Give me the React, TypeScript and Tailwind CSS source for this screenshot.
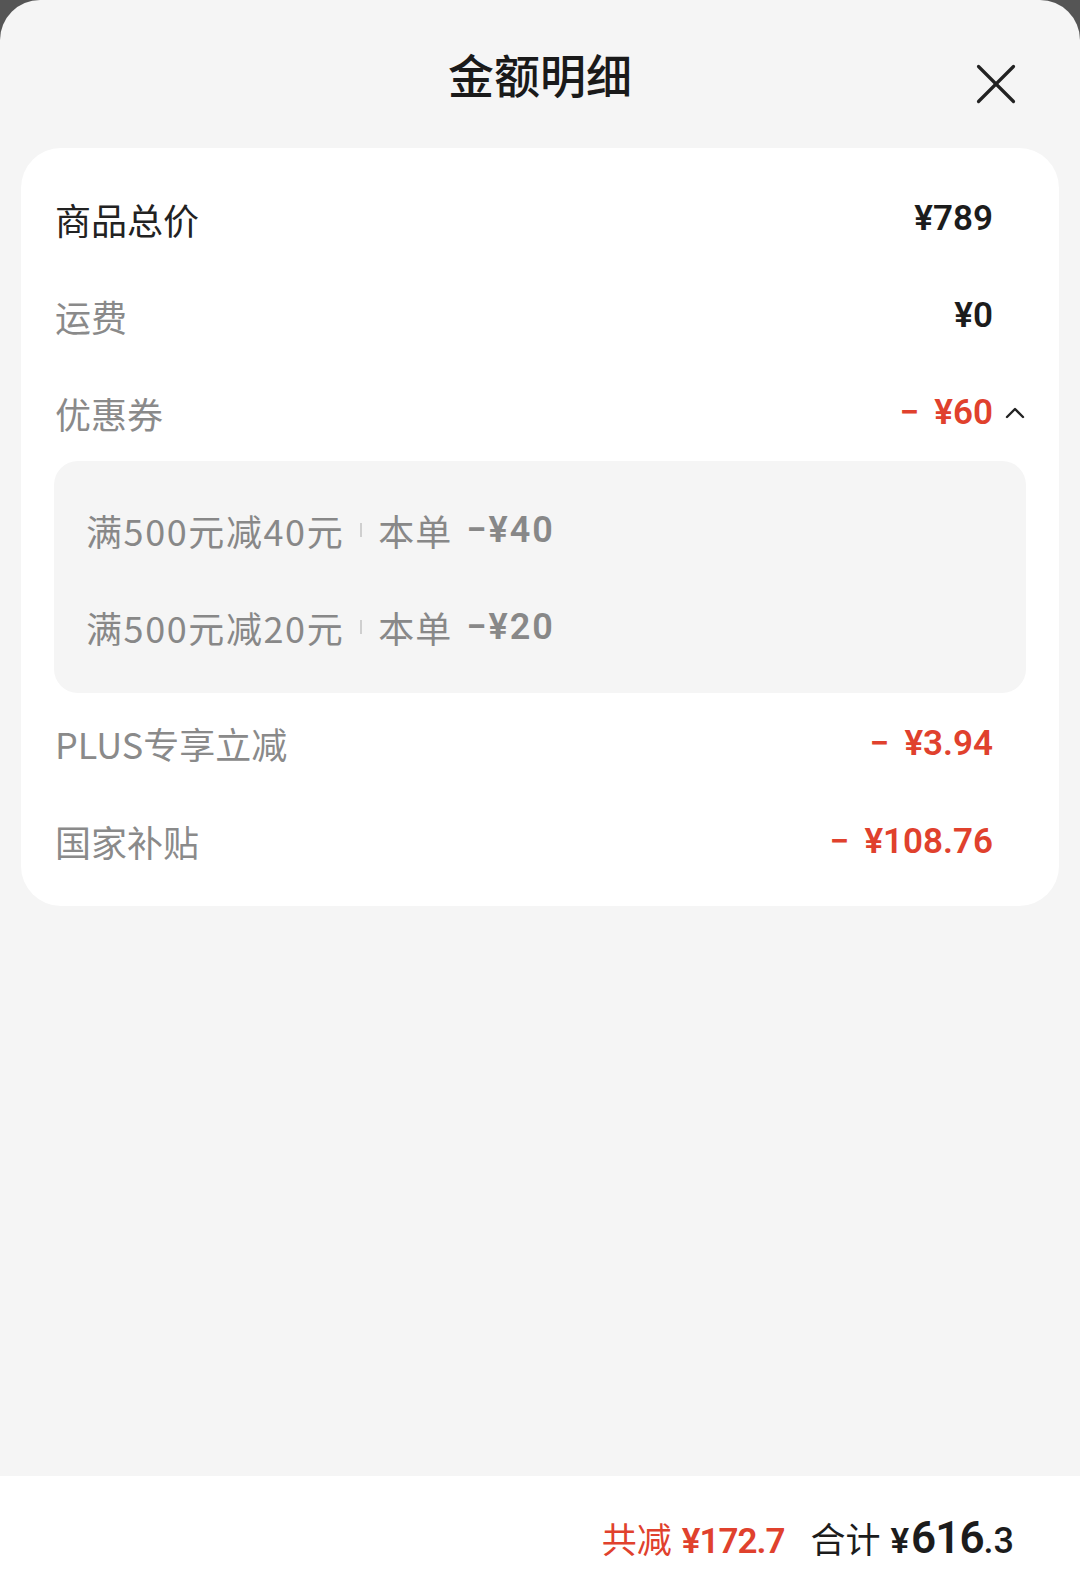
import { X } from 'lucide-react';

const CJK = "font-['Noto_Sans_CJK_SC',sans-serif]";
const NUM = "font-['Roboto','Noto_Sans_CJK_SC',sans-serif]";

type Row = { label: string; value: string; discount?: boolean; strong?: boolean };

const TOP_ROWS: Row[] = [
  { label: '商品总价', value: '¥789', strong: true },
  { label: '运费', value: '¥0' },
];

const BOTTOM_ROWS: Row[] = [
  { label: 'PLUS专享立减', value: '¥3.94', discount: true },
  { label: '国家补贴', value: '¥108.76', discount: true },
];

const COUPONS = [
  { name: '满500元减40元', off: '−¥40' },
  { name: '满500元减20元', off: '−¥20' },
];

function Amount({ value, discount }: { value: string; discount?: boolean }) {
  return (
    <span
      className={`${NUM} flex items-center text-[35px] font-semibold leading-none ${discount ? 'text-[#e0412d]' : 'text-[#1c1c1c]'}`}
    >
      {discount && <span className="mr-[15px]">−</span>}
      {value}
    </span>
  );
}

function DetailRow({ row }: { row: Row }) {
  return (
    <div className="flex h-[98px] items-center justify-between pl-[1px] pr-[33px]">
      <span className={`${CJK} text-[36px] leading-none ${row.strong ? 'text-[#222]' : 'text-[#8a8a8a]'}`}>
        {row.label}
      </span>
      <Amount value={row.value} discount={row.discount} />
    </div>
  );
}

export default function App() {
  return (
    <div className="flex h-[1589px] w-[1080px] flex-col bg-[#555]">
      <div className="flex flex-1 flex-col overflow-hidden rounded-t-[40px] bg-[#f5f5f5]">
        {/* Header */}
        <header className="relative flex h-[148px] justify-center">
          <h1 className={`${CJK} mt-[50px] text-[46px] font-medium leading-[46px] text-[#1a1a1a]`}>金额明细</h1>
          <button className="absolute right-[49px] top-[49px] text-[#222]">
            <X size={70} strokeWidth={1.1} />
          </button>
        </header>

        {/* Card */}
        <section className="mx-[21px] rounded-[40px] bg-white px-[33px] pb-[16px] pt-[22px]">
          {TOP_ROWS.map((row) => (
            <div key={row.label} className="[&>div]:h-[97px]">
              <DetailRow row={row} />
            </div>
          ))}

          <div className="flex h-[97px] items-center justify-between pl-[1px]">
            <span className={`${CJK} text-[36px] leading-none text-[#8a8a8a]`}>优惠券</span>
            <div className="flex items-center">
              <Amount value="¥60" discount />
              <svg width="22" height="14" viewBox="0 0 22 14" className="ml-[11px]">
                <polyline
                  points="3,11 11,3 19,11"
                  fill="none"
                  stroke="#222"
                  strokeWidth="2.4"
                  strokeLinecap="round"
                  strokeLinejoin="round"
                />
              </svg>
            </div>
          </div>

          <div className="rounded-[24px] bg-[#f5f5f5] pb-[18px] pl-[32px] pt-[20px]">
            {COUPONS.map((c) => (
              <div key={c.name} className="flex h-[97px] items-center text-[#888]">
                <span className={`${CJK} text-[36px] leading-none tracking-[1.6px]`}>{c.name}</span>
                <span className="mx-[16px] h-[14px] w-[2px] bg-[#cfcfcf]" />
                <span className={`${CJK} text-[36px] leading-none tracking-[1px]`}>本单</span>
                <span className={`${NUM} ml-[14px] text-[36px] font-semibold leading-none tracking-[2px]`}>{c.off}</span>
              </div>
            ))}
          </div>

          <div className="mt-[1px]">
            {BOTTOM_ROWS.map((row) => (
              <DetailRow key={row.label} row={row} />
            ))}
          </div>
        </section>

        <div className="flex-1" />

        {/* Footer */}
        <footer className="flex h-[113px] items-center justify-end bg-white pr-[66px] pt-[10px]">
          <div className="flex items-baseline">
            <span className={`${CJK} text-[35px] text-[#e0412d]`}>共减</span>
            <span className={`${NUM} ml-[10px] text-[35px] font-semibold tracking-[-1px] text-[#e0412d]`}>¥172.7</span>
            <span className={`${CJK} ml-[26px] text-[35px] text-[#1c1c1c]`}>合计</span>
            <span className={`${NUM} ml-[10px] text-[35px] font-semibold text-[#1c1c1c]`}>¥</span>
            <span className={`${NUM} ml-[2px] text-[44px] font-semibold tracking-[-1px] text-[#1c1c1c]`}>616</span>
            <span className={`${NUM} text-[36px] font-medium text-[#1c1c1c]`}>.3</span>
          </div>
        </footer>
      </div>
    </div>
  );
}
